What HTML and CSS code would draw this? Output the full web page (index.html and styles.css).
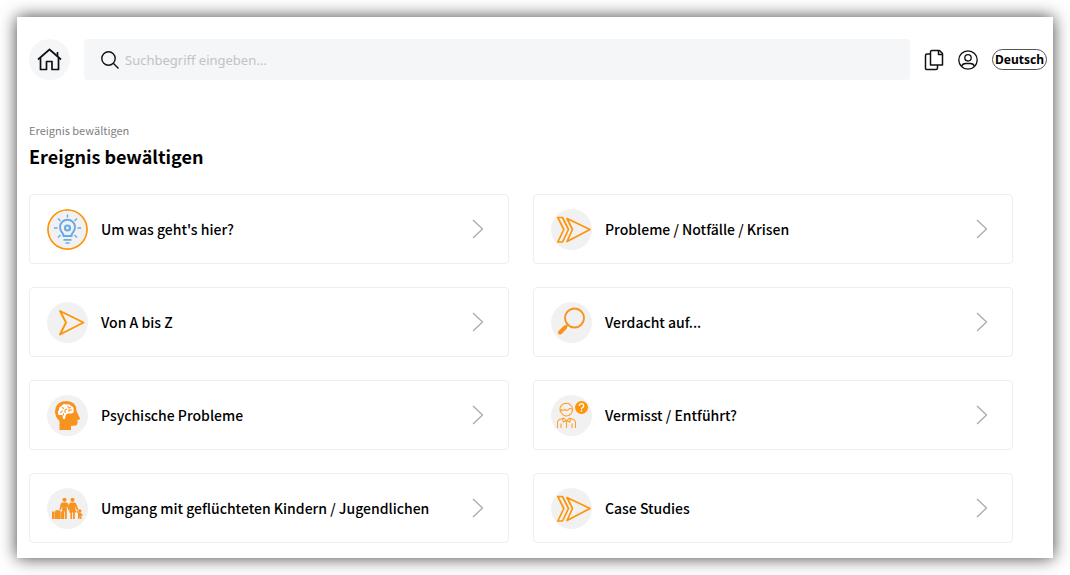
FILE: index.html
```html
<!DOCTYPE html>
<html lang="de">
<head>
  <meta charset="UTF-8">
  <meta name="viewport" content="width=device-width, initial-scale=1.0">
  <title>Ereignis bewältigen</title>
  <link rel="stylesheet" href="styles.css">
</head>
<body>
  <!-- Shared icons -->
  <svg class="sprite" aria-hidden="true">
    <symbol id="chevron" viewBox="0 0 12 20">
      <path d="M1 1L10.500 10L1 19" fill="none" stroke="#aaa" stroke-width="1.300"/>
    </symbol>
    <symbol id="double-arrow" viewBox="0 0 41 41">
      <g fill="none" stroke="#ff9408" stroke-width="1.700" stroke-linejoin="round">
        <path d="M6.800 8.500h4.700l6 12l-6 12.500h-4.700l6-12.500z"/>
        <path d="M16 9.500L39 20.500L16 32.500l5.500-12z"/>
      </g>
    </symbol>
  </svg>

  <div class="page">
    <header class="topbar">
      <a class="home" href="#" aria-label="Startseite">
        <svg width="25" height="23" viewBox="0 0 25 23" fill="none" stroke="#111" stroke-width="1.700" stroke-linejoin="round">
          <path d="M1 11.500L12.500 1.500L24 11.500"/>
          <path d="M20.500 8V4"/>
          <path d="M3.500 10v11.500h6v-8h5.500v8h6.500V10"/>
        </svg>
      </a>
      <form class="search" role="search">
        <svg width="18" height="18" viewBox="0 0 18 18" fill="none" stroke="#111" stroke-width="1.400">
          <circle cx="7.500" cy="7.500" r="6.700"/>
          <path d="M12.300 12.300L17.500 17.500"/>
        </svg>
        <input type="text" placeholder="Suchbegriff eingeben..." aria-label="Suchbegriff eingeben">
      </form>
      <div class="actions">
        <button type="button" class="icon-button" aria-label="Dokumente">
          <svg width="20" height="22" viewBox="0 0 20 22" fill="none" stroke="#111" stroke-width="1.500" stroke-linejoin="round">
            <path d="M8 1.500h7.500l3 3V16H6.500V3q0-1.500 1.500-1.500z"/>
            <path d="M14.500 1.500v4h4"/>
            <path d="M6.500 5H3q-1.500 0-1.500 1.500v13q0 1 1 1H12q1.500 0 1.500-1.500v-3"/>
          </svg>
        </button>
        <button type="button" class="icon-button" aria-label="Profil">
          <svg width="20" height="20" viewBox="0 0 20 20" fill="none" stroke="#111" stroke-width="1.300">
            <circle cx="10" cy="10" r="9.200"/>
            <circle cx="10" cy="7.800" r="3.200"/>
            <path d="M3.500 16.500q1-3 4-3h5q3 0 4 3"/>
          </svg>
        </button>
        <button type="button" class="language">Deutsch</button>
      </div>
    </header>

    <main>
      <nav class="breadcrumb"><a href="#">Ereignis bewältigen</a></nav>
      <h1>Ereignis bewältigen</h1>

      <div class="tiles">
        <a class="tile" href="#">
          <svg class="tile-icon" viewBox="0 0 41 41">
            <circle cx="20.500" cy="20.500" r="19.600" fill="#f1f1f1" stroke="#ff9408" stroke-width="1.800"/>
            <g fill="none" stroke="#6aaae6" stroke-width="1.900">
              <path d="M16.500 27q0-2-1.800-4a7.500 7.500 0 1 1 11.600 0q-1.800 2-1.800 4z"/>
              <circle cx="20.500" cy="19" r="2.500" stroke-width="2.200"/>
              <path d="M16.500 30.800h8M18.500 34h4" stroke-width="1.700"/>
              <path d="M20.500 5.500v3M7 19h3.500M30.500 19h3.500M11 9.500l2.500 2.500M30 9.500l-2.500 2.500M11 28.500l2.500-2.500M30 28.500l-2.500-2.500" stroke-width="1.400"/>
            </g>
          </svg>
          <span class="tile-label">Um was geht's hier?</span>
          <svg class="chevron"><use href="#chevron"/></svg>
        </a>
        <a class="tile" href="#">
          <svg class="tile-icon" viewBox="0 0 41 41"><use href="#double-arrow"/></svg>
          <span class="tile-label">Probleme / Notfälle / Krisen</span>
          <svg class="chevron"><use href="#chevron"/></svg>
        </a>
        <a class="tile" href="#">
          <svg class="tile-icon" viewBox="0 0 41 41">
            <path d="M13 9L36.500 20.500L13 32.500l6-12z" fill="none" stroke="#ff9408" stroke-width="1.900" stroke-linejoin="round"/>
          </svg>
          <span class="tile-label">Von A bis Z</span>
          <svg class="chevron"><use href="#chevron"/></svg>
        </a>
        <a class="tile" href="#">
          <svg class="tile-icon" viewBox="0 0 41 41" fill="none" stroke="#f7931e" stroke-linecap="round">
            <circle cx="23.500" cy="16" r="9.500" stroke-width="1.900"/>
            <path d="M16.500 23l-2 2" stroke-width="1.800"/>
            <path d="M14 25.500l-5 5" stroke-width="4.200"/>
          </svg>
          <span class="tile-label">Verdacht auf...</span>
          <svg class="chevron"><use href="#chevron"/></svg>
        </a>
        <a class="tile" href="#">
          <svg class="tile-icon" viewBox="0 0 41 41">
            <path d="M12.500 35V26q-4.500-4-4.500-9.500Q8.500 6 19 6q10.500 0 10.500 10l3.500 7.500q.3 1-1.200 1.200h-1.300v3.800q-.5 2.500-3.500 2.300h-3V35z" fill="#f7931e"/>
            <path d="M11.500 20q-1.500-3 .5-5-.5-3 2.500-4 2-3 5-1.500 3-1 4.500 1.500 3 .5 2.500 4 1 3-2 3.500h-3.500q-2 0-2.500 2.500l-.5 3h-2l-.5-4z" fill="#fff"/>
            <path d="M13.500 18l2-2.500M15 12.500l2 1M18 18v-3l2-1M20.500 11l1.500 2 2-.5M22 17v-2h3M16.500 20.500v-2" fill="none" stroke="#f7931e" stroke-width="1.100"/>
          </svg>
          <span class="tile-label">Psychische Probleme</span>
          <svg class="chevron"><use href="#chevron"/></svg>
        </a>
        <a class="tile" href="#">
          <svg class="tile-icon" viewBox="0 0 41 41" fill="none" stroke="#ffa12a" stroke-width="1.100">
            <path d="M9.500 14.500a6 6.500 0 0 0 12 0M9.500 17q-1.500-5 1.500-7 1.500-2 5-1.500 2-.5 2.500 1 3.500 1 3 7M10 14.500q1.500 1.500 3.500 0 3 2 5-1l3 .5"/>
            <path d="M6.500 33v-5q0-3.500 3.500-4l2.500-.8 3 2.800 3-2.800 2.500.8q3.500.5 3.500 4v5M10 28.500V33M21 28.500V33M15.500 26v7M11.500 24l.8 3 3.200-1.200 3.200 1.200.8-3"/>
            <circle cx="30.500" cy="12.500" r="6.500" fill="#ff9408" stroke="none"/>
            <path d="M28.300 11q0-2.300 2.200-2.300t2.200 2q0 1.200-1.200 1.800t-1 1.800M30.500 15.300v1.500" stroke="#fff" stroke-width="1.300"/>
          </svg>
          <span class="tile-label">Vermisst / Entführt?</span>
          <svg class="chevron"><use href="#chevron"/></svg>
        </a>
        <a class="tile" href="#">
          <svg class="tile-icon" viewBox="0 0 41 41" fill="#f7931e">
            <path d="M5 23.500h3.500v-1.300h4.500v1.300H16V31H5z"/>
            <path d="M7.500 23.500V31M13.700 23.500V31" stroke="#f1f1f1" stroke-width=".4"/>
            <circle cx="17.500" cy="11.800" r="2.100"/>
            <circle cx="25.500" cy="11.800" r="2.100"/>
            <path d="M15.500 14.500h4q1.500 0 2 2l1.200 5-1.200.5-1.700-4V31h-1.900v-7.500h-.8V31h-1.900V18l-1.200 4-1.500-.5 1-5q.5-2 2-2z"/>
            <path d="M23.500 14.500h4q1.500 0 2 2l2 5.500-1.300.6-2.400-4.600 1.500 6.500h-1.500V31h-1.700v-6.500h-1V31h-1.700v-6.500H22l1.200-6.500-1 4-1.200-.5 1-5q.5-2 1.500-2z"/>
            <circle cx="32.800" cy="23" r="1.700"/>
            <path d="M30 22.500l2 2.300h1.800l2.200 2.500-.8.800-1-.8.500 3.700h-1.500v-1.500h-.8V31H31v-5.500l-1.500-2z"/>
          </svg>
          <span class="tile-label">Umgang mit geflüchteten Kindern / Jugendlichen</span>
          <svg class="chevron"><use href="#chevron"/></svg>
        </a>
        <a class="tile" href="#">
          <svg class="tile-icon" viewBox="0 0 41 41"><use href="#double-arrow"/></svg>
          <span class="tile-label">Case Studies</span>
          <svg class="chevron"><use href="#chevron"/></svg>
        </a>
      </div>
    </main>
  </div>
</body>
</html>
```
FILE: styles.css
```css
* {
  box-sizing: border-box;
}
body {
  margin: 0;
  padding: 17px;
  background: #fff;
  color: #000;
  font-family: "Noto Sans CJK SC", "Noto Sans", sans-serif;
}
a {
  color: inherit;
  text-decoration: none;
}
svg {
  display: block;
  flex-shrink: 0;
}
.sprite {
  display: none;
}
.page {
  min-height: calc(100vh - 34px);
  padding: 22px 6px 15px 12px;
  background: #fff;
  box-shadow: 0 0 16px rgba(0, 0, 0, 0.75);
}

/* Top bar */
.topbar {
  display: flex;
  align-items: center;
}
.home {
  display: flex;
  align-items: center;
  justify-content: center;
  width: 41px;
  height: 41px;
  margin-right: 14px;
  border-radius: 50%;
  background: #f4f6f8;
}
.search {
  display: flex;
  flex: 1;
  align-items: center;
  gap: 6px;
  height: 41px;
  padding: 0 17px;
  border-radius: 4px;
  background: #f4f6f8;
}
.search input {
  flex: 1;
  min-width: 0;
  padding: 0;
  border: none;
  outline: none;
  background: none;
  font-family: "Noto Sans", sans-serif;
  font-size: 13px;
}
.search input::placeholder {
  color: #c3c3c3;
}
.actions {
  display: flex;
  align-items: center;
  gap: 14px;
  margin-left: 14px;
}
.icon-button {
  padding: 0;
  border: none;
  background: none;
  cursor: pointer;
}
.language {
  height: 21px;
  padding: 0 2px;
  border: 1px solid #555;
  border-radius: 11px;
  background: #fff;
  color: #000;
  font-family: "Noto Sans", sans-serif;
  font-size: 12px;
  font-weight: 700;
  line-height: 18px;
  cursor: pointer;
}

/* Content */
main {
  padding: 41px 34px 0 0;
}
.breadcrumb {
  color: #808080;
  font-size: 11px;
  line-height: 18px;
}
h1 {
  margin: 4px 0 25px;
  font-size: 18px;
  font-weight: 700;
  line-height: 26px;
}
.tiles {
  display: grid;
  grid-template-columns: 1fr 1fr;
  gap: 23px 24px;
}
.tile {
  display: flex;
  align-items: center;
  min-height: 70px;
  padding: 0 24px 0 17px;
  border: 1px solid #eee;
  border-radius: 4px;
}
.tile-icon {
  width: 41px;
  height: 41px;
  margin-right: 13px;
  border-radius: 50%;
  background: #f1f1f1;
}
.tile-label {
  flex: 1;
  font-size: 14px;
  font-weight: 500;
  line-height: 20px;
}
.chevron {
  width: 12px;
  height: 20px;
}

@media (max-width: 700px) {
  .tiles {
    grid-template-columns: 1fr;
  }
}
```
